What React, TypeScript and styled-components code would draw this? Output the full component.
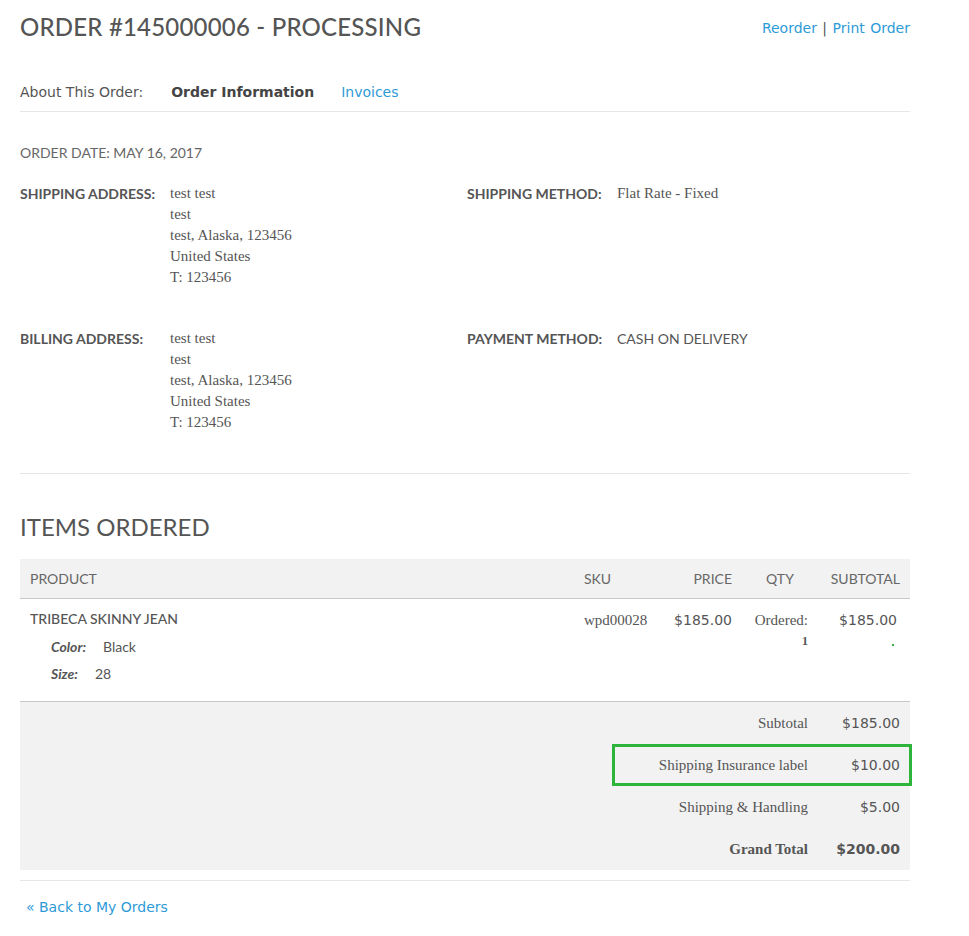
import React from "react";
import styled, { createGlobalStyle } from "styled-components";

const Global = createGlobalStyle`
  html, body { margin: 0; padding: 0; background: #fff; }
  body { font-family: "DejaVu Sans", Verdana, sans-serif; color: #555; }
`;

const HEAD = `Lato, "Open Sans", sans-serif`;
const SERIF = `"Liberation Serif", Georgia, serif`;
const SANS = `"DejaVu Sans", Verdana, sans-serif`;
const LINK = "#2e9bd6";

const Page = styled.div`
  width: 890px;
  padding: 0 20px;
`;

const TitleBar = styled.div`
  display: flex;
  justify-content: space-between;
  align-items: flex-start;
  padding-top: 10px;
  height: 62px;
`;

const Title = styled.h1`
  margin: 0;
  font-family: ${HEAD};
  font-weight: 500;
  font-size: 24px;
  line-height: 34px;
  color: #555;
  letter-spacing: 0.2px;
`;

const Actions = styled.div`
  font-family: ${SANS};
  font-size: 14px;
  line-height: 34px;
  color: #555;
  padding-top: 1px;
  word-spacing: 1px;
`;

const Link = styled.a`
  color: ${LINK};
  text-decoration: none;
`;

const Tabs = styled.div`
  display: flex;
  align-items: center;
  height: 39px;
  border-bottom: 1px solid #e6e6e6;
  font-family: ${SANS};
  font-size: 14px;
  gap: 27px;
`;

const TabLabel = styled.span`
  color: #555;
  margin-right: 1px;
`;

const Tab = styled.span<{ $active?: boolean }>`
  color: ${(p) => (p.$active ? "#444" : LINK)};
  font-weight: ${(p) => (p.$active ? 700 : 400)};
`;

const DateLine = styled.div`
  font-family: ${HEAD};
  font-size: 14px;
  color: #666;
  margin-top: 32px;
  line-height: 18px;
  text-transform: uppercase;
`;

const InfoGrid = styled.div`
  display: grid;
  grid-template-columns: 447px 1fr;
  row-gap: 40px;
  margin-top: 21px;
  padding-bottom: 40px;
  border-bottom: 1px solid #e6e6e6;
`;

const Info = styled.div`
  display: flex;
`;

const InfoLabel = styled.div`
  width: 150px;
  flex: none;
  font-family: ${HEAD};
  font-weight: 700;
  font-size: 14px;
  color: #555;
  line-height: 21px;
  text-transform: uppercase;
`;

const InfoValue = styled.div`
  font-family: ${SERIF};
  font-size: 15px;
  line-height: 21px;
  color: #555;
`;

const InfoValueSans = styled.div`
  font-family: ${HEAD};
  font-size: 14px;
  line-height: 21px;
  color: #555;
  text-transform: uppercase;
`;

const SectionTitle = styled.h2`
  margin: 38px 0 17px;
  font-family: ${HEAD};
  font-weight: 400;
  font-size: 24px;
  line-height: 30px;
  color: #555;
`;

const Table = styled.table`
  width: 100%;
  border-collapse: collapse;
`;

const Th = styled.th<{ $align?: string; $w?: number }>`
  background: #f2f2f2;
  font-family: ${HEAD};
  font-weight: 400;
  font-size: 14px;
  color: #666;
  text-transform: uppercase;
  text-align: ${(p) => p.$align || "left"};
  width: ${(p) => (p.$w ? `${p.$w}px` : "auto")};
  padding: 11px 10px 11px;
  height: 17px;
  border-bottom: 1px solid #c8c8c8;
`;

const Td = styled.td<{ $align?: string }>`
  vertical-align: top;
  text-align: ${(p) => p.$align || "left"};
  padding: 11px 10px 18px;
`;

const ProductName = styled.div`
  font-family: ${HEAD};
  font-weight: 500;
  font-size: 14px;
  line-height: 18px;
  color: #555;
  text-transform: uppercase;
`;

const Options = styled.div`
  margin: 10px 0 0 21px;
  display: flex;
  flex-direction: column;
  gap: 9px;
  font-family: ${HEAD};
  font-size: 14px;
  line-height: 18px;
`;

const Option = styled.div`
  display: flex;
  gap: 17px;
`;

const OptLabel = styled.span`
  font-style: italic;
  font-weight: 700;
  color: #555;
`;

const OptValue = styled.span`
  color: #555;
`;

const Serif = styled.span`
  font-family: ${SERIF};
  font-size: 15px;
  line-height: 20px;
  color: #555;
`;

const Money = styled.span`
  font-family: ${SANS};
  font-size: 14px;
  line-height: 20px;
  color: #555;
`;

const QtyBox = styled.div`
  display: inline-flex;
  flex-direction: column;
  align-items: flex-end;
`;

const QtyNum = styled.span`
  font-family: ${SERIF};
  font-weight: 700;
  font-size: 12px;
  line-height: 16px;
  color: #555;
  margin-top: 3px;
`;

const SubCell = styled.div`
  display: inline-flex;
  flex-direction: column;
  align-items: flex-end;
  margin-right: 3px;
`;

const GreenDot = styled.span`
  width: 2px;
  height: 2px;
  background: #3cb043;
  margin: 14px 3px 0 0;
`;

const Totals = styled.div`
  background: #f2f2f2;
  border-top: 1px solid #c8c8c8;
  display: flex;
  flex-direction: column;
  align-items: flex-end;
`;

const TotalRow = styled.div<{ $highlight?: boolean }>`
  display: flex;
  justify-content: flex-end;
  align-items: center;
  height: 42px;
  box-sizing: border-box;
  width: ${(p) => (p.$highlight ? "300px" : "auto")};
  margin-right: ${(p) => (p.$highlight ? "-2px" : "0")};
  border: ${(p) => (p.$highlight ? "3px solid #2db43a" : "none")};
  padding-right: ${(p) => (p.$highlight ? "9px" : "10px")};
`;

const TotalLabel = styled.span<{ $bold?: boolean }>`
  font-family: ${SERIF};
  font-size: 15px;
  color: #555;
  font-weight: ${(p) => (p.$bold ? 700 : 400)};
  text-align: right;
`;

const TotalAmount = styled.span<{ $bold?: boolean }>`
  width: 92px;
  text-align: right;
  font-family: ${SANS};
  font-size: 14px;
  font-weight: ${(p) => (p.$bold ? 700 : 400)};
  color: #555;
`;

const Footer = styled.div`
  margin-top: 10px;
  border-top: 1px solid #e6e6e6;
  padding: 18px 6px;
  font-family: ${SANS};
  font-size: 14px;
`;

const address = ["test test", "test", "test, Alaska, 123456", "United States", "T: 123456"];

const Address = () => (
  <InfoValue>
    {address.map((l) => (
      <div key={l}>{l}</div>
    ))}
  </InfoValue>
);

export default function App() {
  return (
    <Page>
      <Global />
      <TitleBar>
        <Title>ORDER #145000006 - PROCESSING</Title>
        <Actions>
          <Link href="#">Reorder</Link> | <Link href="#">Print Order</Link>
        </Actions>
      </TitleBar>
      <Tabs>
        <TabLabel>About This Order:</TabLabel>
        <Tab $active>Order Information</Tab>
        <Tab>Invoices</Tab>
      </Tabs>
      <DateLine>Order Date: May 16, 2017</DateLine>
      <InfoGrid>
        <Info>
          <InfoLabel>Shipping Address:</InfoLabel>
          <Address />
        </Info>
        <Info>
          <InfoLabel>Shipping Method:</InfoLabel>
          <InfoValue>Flat Rate - Fixed</InfoValue>
        </Info>
        <Info>
          <InfoLabel>Billing Address:</InfoLabel>
          <Address />
        </Info>
        <Info>
          <InfoLabel>Payment Method:</InfoLabel>
          <InfoValueSans>Cash On Delivery</InfoValueSans>
        </Info>
      </InfoGrid>
      <SectionTitle>ITEMS ORDERED</SectionTitle>
      <Table>
        <thead>
          <tr>
            <Th>Product</Th>
            <Th $w={70}>SKU</Th>
            <Th $align="right" $w={58}>Price</Th>
            <Th $align="center" $w={56}>Qty</Th>
            <Th $align="right" $w={72}>Subtotal</Th>
          </tr>
        </thead>
        <tbody>
          <tr>
            <Td>
              <ProductName>Tribeca Skinny Jean</ProductName>
              <Options>
                <Option>
                  <OptLabel>Color:</OptLabel>
                  <OptValue>Black</OptValue>
                </Option>
                <Option>
                  <OptLabel>Size:</OptLabel>
                  <OptValue>28</OptValue>
                </Option>
              </Options>
            </Td>
            <Td>
              <Serif>wpd00028</Serif>
            </Td>
            <Td $align="right">
              <Money>$185.00</Money>
            </Td>
            <Td $align="right">
              <QtyBox>
                <Serif>Ordered:</Serif>
                <QtyNum>1</QtyNum>
              </QtyBox>
            </Td>
            <Td $align="right">
              <SubCell>
                <Money>$185.00</Money>
                <GreenDot />
              </SubCell>
            </Td>
          </tr>
        </tbody>
      </Table>
      <Totals>
        <TotalRow>
          <TotalLabel>Subtotal</TotalLabel>
          <TotalAmount>$185.00</TotalAmount>
        </TotalRow>
        <TotalRow $highlight>
          <TotalLabel>Shipping Insurance label</TotalLabel>
          <TotalAmount>$10.00</TotalAmount>
        </TotalRow>
        <TotalRow>
          <TotalLabel>Shipping &amp; Handling</TotalLabel>
          <TotalAmount>$5.00</TotalAmount>
        </TotalRow>
        <TotalRow>
          <TotalLabel $bold>Grand Total</TotalLabel>
          <TotalAmount $bold>$200.00</TotalAmount>
        </TotalRow>
      </Totals>
      <Footer>
        <Link href="#">« Back to My Orders</Link>
      </Footer>
    </Page>
  );
}
